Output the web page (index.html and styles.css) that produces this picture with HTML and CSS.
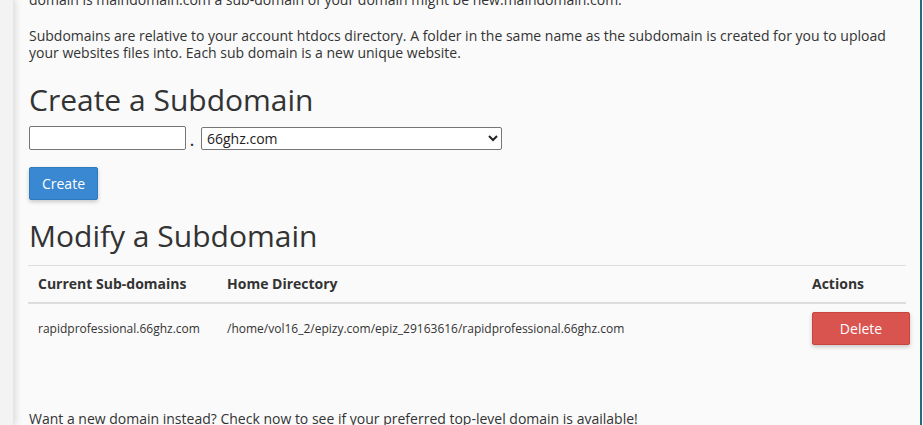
FILE: index.html
```html
<!DOCTYPE html>
<html lang="en">
<head>
  <meta charset="UTF-8" />
  <meta name="viewport" content="width=device-width, initial-scale=1.0" />
  <title>Subdomains</title>
  <link rel="stylesheet" href="styles.css">
</head>
<body>
  <div class="page">
    <!-- Left menu strip -->
    <aside class="sidebar"></aside>

    <main class="content">
      <p>domain is maindomain.com a sub-domain of your domain might be new.maindomain.com.</p>
      <p>Subdomains are relative to your account htdocs directory. A folder in the same name as the subdomain is created for you to upload your websites files into. Each sub domain is a new unique website.</p>

      <!-- Create form -->
      <h2 class="create-title">Create a Subdomain</h2>
      <form class="create-form">
        <div class="field-row">
          <input type="text" class="sub-input" />
          <span class="dot">.</span>
          <select class="domain-select">
            <option>66ghz.com</option>
          </select>
        </div>
        <button type="button" class="btn btn-blue">Create</button>
      </form>

      <!-- Existing subdomains -->
      <h2 class="modify-title">Modify a Subdomain</h2>
      <table class="sub-table">
        <colgroup>
          <col class="col-sub" />
          <col class="col-dir" />
          <col class="col-act" />
        </colgroup>
        <thead>
          <tr>
            <th>Current Sub-domains</th>
            <th>Home Directory</th>
            <th>Actions</th>
          </tr>
        </thead>
        <tbody>
          <tr>
            <td>rapidprofessional.66ghz.com</td>
            <td>/home/vol16_2/epizy.com/epiz_29163616/rapidprofessional.66ghz.com</td>
            <td><button type="button" class="btn btn-red">Delete</button></td>
          </tr>
        </tbody>
      </table>

      <p class="note">Want a new domain instead? Check now to see if your preferred top-level domain is available!</p>
    </main>

    <div class="edge"></div>
  </div>
</body>
</html>
```

FILE: styles.css
```css
body {
  font-family: "Open Sans", "Liberation Sans", sans-serif;
  font-size: 14px;
  line-height: 17px;
  margin: 0;
  padding: 0;
  background-color: #fafafa;
  color: #333;
  overflow: hidden;
}

.page {
  display: flex;
  height: 425px;
}

.sidebar {
  width: 13px;
  flex-shrink: 0;
  background-color: #f3f3f3;
  box-shadow: 2px 0 6px rgba(0, 0, 0, 0.12);
  border-right: 1px solid #e6e6e6;
}

.content {
  flex: 1;
  padding: 0 13px 0 15px;
  margin-top: -9px;
}

.edge {
  width: 2px;
  flex-shrink: 0;
  background-color: #1f6e78;
  margin-right: 1px;
}

p {
  margin: 0 0 19px;
}

h2 {
  font-size: 30px;
  font-weight: 400;
  line-height: 36px;
  margin: 0 0 8px;
  color: #333;
}

.create-title {
  margin-top: 21px;
}

.modify-title {
  margin-top: 18px;
}

.create-form {
  margin: 0;
}

.field-row {
  display: flex;
  align-items: center;
  height: 24px;
}

.sub-input {
  width: 157px;
  height: 24px;
  box-sizing: border-box;
  border: 1px solid #767676;
  border-radius: 2px;
  background-color: #fff;
  padding: 0 4px;
  font-family: inherit;
}

.dot {
  font-weight: 700;
  font-size: 14px;
  margin: 4px 7px 0 4px;
}

.domain-select {
  width: 301px;
  height: 23px;
  box-sizing: border-box;
  border: 1px solid #767676;
  border-radius: 2px;
  background-color: #fff;
  font-family: inherit;
  font-size: 14px;
  color: #222;
  padding: 0 1px;
}

.btn {
  font-family: inherit;
  font-size: 14px;
  color: #fff;
  border: 1px solid transparent;
  border-radius: 2px;
  height: 33px;
  cursor: pointer;
  box-shadow: 0 2px 4px rgba(0, 0, 0, 0.2);
}

.btn-blue {
  background-color: #3a88d2;
  border-color: #2f79be;
  width: 69px;
  margin-top: 17px;
}

.btn-red {
  background-color: #d9534f;
  border-color: #c9433f;
  width: 98px;
}

.sub-table {
  width: 878px;
  table-layout: fixed;
  border-collapse: collapse;
  margin-left: -1px;
  margin-top: 11px;
}

.col-sub {
  width: 189px;
}

.col-dir {
  width: 585px;
}

.col-act {
  width: 104px;
}

.sub-table th {
  text-align: left;
  font-weight: 700;
  padding: 8px 8px 8px 10px;
  line-height: 20px;
  border-top: 1px solid #ddd;
  border-bottom: 2px solid #ddd;
  color: #333;
}

.sub-table td {
  font-size: 12px;
  padding: 8px 8px 8px 10px;
  vertical-align: middle;
  color: #333;
  white-space: nowrap;
}

.note {
  margin-top: 57px;
}
```
